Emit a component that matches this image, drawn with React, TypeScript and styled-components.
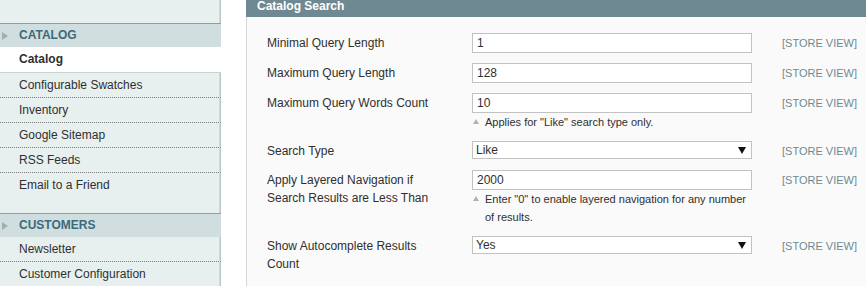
import React from "react";
import styled, { createGlobalStyle } from "styled-components";

const Global = createGlobalStyle`
  html, body { margin: 0; padding: 0; background: #fff; }
  body { font-family: Arial, "Liberation Sans", Helvetica, sans-serif; font-size: 12px; color: #2f2f2f; overflow: hidden; }
`;

const Page = styled.div`
  display: flex;
  width: 866px;
  height: 286px;
  overflow: hidden;
  align-items: flex-start;
`;

const Side = styled.nav`
  width: 221px;
  flex: none;
  display: flex;
  flex-direction: column;
`;

const SideSpacer = styled.div<{ $h: number }>`
  height: ${(p) => p.$h}px;
  background: #e7efef;
  border-right: 1px solid #b9c5c5;
  box-shadow: inset -1px 0 0 #d3dcdc;
`;

const SideHead = styled.div`
  position: relative;
  height: 23px;
  border-top: 1px solid #8b9ea1;
  background: #d1dedf;
  color: #3c6a7b;
  font-weight: bold;
  font-size: 12px;
  line-height: 23px;
  padding-left: 19px;
  text-transform: uppercase;
`;

const Arrow = styled.span`
  position: absolute;
  left: 2px;
  top: 8px;
  width: 0;
  height: 0;
  border-top: 4px solid transparent;
  border-bottom: 4px solid transparent;
  border-left: 6px solid #9fb0b1;
`;

const SideItem = styled.div<{ $active?: boolean; $last?: boolean }>`
  height: ${(p) => (p.$active ? 25 : 24)}px;
  line-height: ${(p) => (p.$active ? 25 : 24)}px;
  padding-left: 19px;
  font-size: 12px;
  color: #2f2f2f;
  font-weight: ${(p) => (p.$active ? "bold" : "normal")};
  background: ${(p) => (p.$active ? "#fff" : "#e7efef")};
  border-right: ${(p) => (p.$active ? "0" : "1px solid #b9c5c5")};
  box-shadow: ${(p) => (p.$active ? "none" : "inset -1px 0 0 #d3dcdc")};
  border-bottom: ${(p) =>
    p.$last ? "0" : p.$active ? "1px solid #c9d3d3" : "1px dotted #7b7b7b"};
`;

const Main = styled.main`
  flex: 1;
  margin-left: 25px;
  display: flex;
  flex-direction: column;
`;

const PanelHead = styled.div`
  height: 17px;
  background: #6f8992;
  color: #fff;
  font-weight: bold;
  font-size: 12px;
  line-height: 12px;
  padding-left: 11px;
`;

const PanelBody = styled.div`
  background: #fafafa;
  border-left: 1px solid #d6d6d6;
  padding: 11px 0 0 20px;
  height: 300px;
`;

const Row = styled.div`
  display: grid;
  grid-template-columns: 205px 280px 30px auto;
  padding: 5px 0;
`;

const Label = styled.div`
  padding-top: 1px;
  line-height: 18px;
  font-size: 12px;
  color: #2f2f2f;
`;

const Value = styled.div`
  display: flex;
  flex-direction: column;
`;

const TextInput = styled.input`
  box-sizing: border-box;
  width: 280px;
  height: 20px;
  margin: 0;
  border: 1px solid #c2c2c2;
  background: #fff;
  padding: 0 4px;
  font-family: Arial, "Liberation Sans", sans-serif;
  font-size: 12px;
  color: #2f2f2f;
  outline: none;
`;

const SelectWrap = styled.div`
  position: relative;
  width: 280px;
  height: 18px;
`;

const Select = styled.select`
  box-sizing: border-box;
  width: 280px;
  height: 18px;
  margin: 0;
  border: 1px solid #c2c2c2;
  border-radius: 0;
  background: #fff;
  padding: 0 3px;
  font-family: Arial, "Liberation Sans", sans-serif;
  font-size: 12px;
  color: #2f2f2f;
  appearance: none;
  -webkit-appearance: none;
  outline: none;
`;

const SelectArrow = styled.span`
  position: absolute;
  right: 6px;
  top: 6px;
  width: 0;
  height: 0;
  border-left: 4px solid transparent;
  border-right: 4px solid transparent;
  border-top: 7px solid #111;
  pointer-events: none;
`;

const Note = styled.p`
  margin: 0;
  padding-left: 13px;
  position: relative;
  font-size: 11px;
  line-height: 18px;
  color: #2f2f2f;
`;

const NoteMark = styled.span`
  position: absolute;
  left: 1px;
  top: 6px;
  width: 0;
  height: 0;
  border-left: 3px solid transparent;
  border-right: 3px solid transparent;
  border-bottom: 5px solid #a9b3b6;
`;

const Scope = styled.div`
  grid-column: 4;
  padding-top: 1px;
  font-size: 11px;
  line-height: 18px;
  color: #6f8992;
`;

type Field = {
  label: React.ReactNode;
  kind: "text" | "select";
  value: string;
  note?: string;
};

const fields: Field[] = [
  { label: "Minimal Query Length", kind: "text", value: "1" },
  { label: "Maximum Query Length", kind: "text", value: "128" },
  {
    label: "Maximum Query Words Count",
    kind: "text",
    value: "10",
    note: 'Applies for "Like" search type only.',
  },
  { label: "Search Type", kind: "select", value: "Like" },
  {
    label: (
      <>
        Apply Layered Navigation if
        <br />
        Search Results are Less Than
      </>
    ),
    kind: "text",
    value: "2000",
    note: 'Enter "0" to enable layered navigation for any number of results.',
  },
  {
    label: (
      <>
        Show Autocomplete Results
        <br />
        Count
      </>
    ),
    kind: "select",
    value: "Yes",
  },
];

const catalogItems = [
  "Catalog",
  "Configurable Swatches",
  "Inventory",
  "Google Sitemap",
  "RSS Feeds",
  "Email to a Friend",
];
const customerItems = ["Newsletter", "Customer Configuration"];

export default function App() {
  return (
    <>
      <Global />
      <Page>
        <Side>
          <SideSpacer $h={23} />
          <SideHead>
            <Arrow />
            Catalog
          </SideHead>
          {catalogItems.map((t, i) => (
            <SideItem
              key={t}
              $active={i === 0}
              $last={i === catalogItems.length - 1}
            >
              {t}
            </SideItem>
          ))}
          <SideSpacer $h={16} />
          <SideHead>
            <Arrow />
            Customers
          </SideHead>
          {customerItems.map((t) => (
            <SideItem key={t}>{t}</SideItem>
          ))}
        </Side>
        <Main>
          <PanelHead>Catalog Search</PanelHead>
          <PanelBody>
            {fields.map((f, i) => (
              <Row key={i}>
                <Label>{f.label}</Label>
                <Value>
                  {f.kind === "text" ? (
                    <TextInput defaultValue={f.value} />
                  ) : (
                    <SelectWrap>
                      <Select defaultValue={f.value}>
                        <option>{f.value}</option>
                      </Select>
                      <SelectArrow />
                    </SelectWrap>
                  )}
                  {f.note && (
                    <Note>
                      <NoteMark />
                      {f.note}
                    </Note>
                  )}
                </Value>
                <Scope>[STORE VIEW]</Scope>
              </Row>
            ))}
          </PanelBody>
        </Main>
      </Page>
    </>
  );
}
